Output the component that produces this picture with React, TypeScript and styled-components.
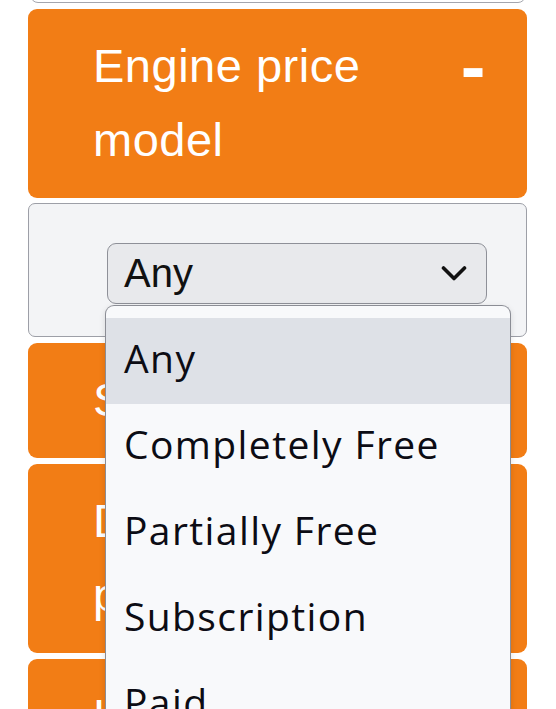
import React from "react";
import styled, { createGlobalStyle } from "styled-components";

const GlobalStyle = createGlobalStyle`
  html, body {
    margin: 0;
    padding: 0;
    background: #ffffff;
    overflow: hidden;
  }
  * { box-sizing: border-box; }
`;

const ORANGE = "#f27d15";

const Page = styled.div`
  width: 556px;
  height: 709px;
  overflow: hidden;
  padding: 0 29px 0 28px;
  display: flex;
  flex-direction: column;
  gap: 6px;
  font-family: "Liberation Sans", Arial, sans-serif;
`;

const PrevPanel = styled.div`
  flex: none;
  height: 40px;
  margin-top: -37px;
  margin-left: 2px;
  margin-right: 1px;
  background: #ffffff;
  border: 1px solid #a4a6ae;
  border-radius: 8px;
`;

const SectionHeader = styled.div`
  flex: none;
  display: flex;
  justify-content: space-between;
  align-items: flex-start;
  gap: 16px;
  background: ${ORANGE};
  border-radius: 9px;
  padding: 20px 41px 21px 65px;
  color: #ffffff;
  font-size: 47px;
  line-height: 74px;
  letter-spacing: 0.5px;
`;

const Title = styled.div`
  flex: 1;
`;

const Toggle = styled.span`
  flex: none;
  font-size: 74px;
  font-weight: 700;
  line-height: 74px;
  position: relative;
  top: 1px;
`;

const Body = styled.div`
  flex: none;
  background: #f3f4f6;
  border: 1px solid #9d9fa7;
  border-radius: 7px;
  padding: 39px 39px 32px 78px;
  margin-top: -1px;
`;

const SelectWrap = styled.div`
  position: relative;
`;

const SelectBox = styled.div`
  height: 61px;
  display: flex;
  align-items: center;
  justify-content: space-between;
  padding: 0 19px 0 16px;
  background: #e8e9ec;
  border: 1px solid #8e9098;
  border-radius: 9px;
  color: #111111;
  font-size: 40px;
`;

const Menu = styled.div`
  position: absolute;
  top: calc(100% + 1px);
  left: -2px;
  right: -24px;
  height: 420px;
  z-index: 10;
  background: #f8f9fb;
  border: 1px solid #8b8d95;
  border-bottom: none;
  border-radius: 9px 9px 0 0;
  padding-top: 12px;
  box-shadow: 0 2px 6px rgba(0, 0, 0, 0.12);
`;

const Option = styled.div<{ $active?: boolean }>`
  height: 86px;
  display: flex;
  align-items: center;
  padding-left: 18px;
  padding-bottom: 8px;
  background: ${(p) => (p.$active ? "#dee1e7" : "transparent")};
  color: #0c0c14;
  font-family: "Open Sans", "Noto Sans", sans-serif;
  font-size: 39px;
  letter-spacing: 1.4px;
`;

const Chevron = () => (
  <svg width="26" height="17" viewBox="0 0 26 17" fill="none">
    <path
      d="M2.5 3 L13 13.5 L23.5 3"
      stroke="#111"
      strokeWidth="3.6"
      strokeLinecap="round"
      strokeLinejoin="round"
    />
  </svg>
);

const options = ["Any", "Completely Free", "Partially Free", "Subscription", "Paid"];

export default function App() {
  return (
    <>
      <GlobalStyle />
      <Page>
        <PrevPanel />
        <SectionHeader>
          <Title>Engine price model</Title>
          <Toggle>-</Toggle>
        </SectionHeader>
        <Body>
          <SelectWrap>
            <SelectBox>
              <span>Any</span>
              <Chevron />
            </SelectBox>
            <Menu>
              {options.map((o, i) => (
                <Option key={o} $active={i === 0}>
                  {o}
                </Option>
              ))}
            </Menu>
          </SelectWrap>
        </Body>
        <SectionHeader>
          <Title>Supported OS</Title>
          <Toggle>+</Toggle>
        </SectionHeader>
        <SectionHeader>
          <Title>Development platform</Title>
          <Toggle>+</Toggle>
        </SectionHeader>
        <SectionHeader>
          <Title>Language</Title>
          <Toggle>+</Toggle>
        </SectionHeader>
      </Page>
    </>
  );
}
